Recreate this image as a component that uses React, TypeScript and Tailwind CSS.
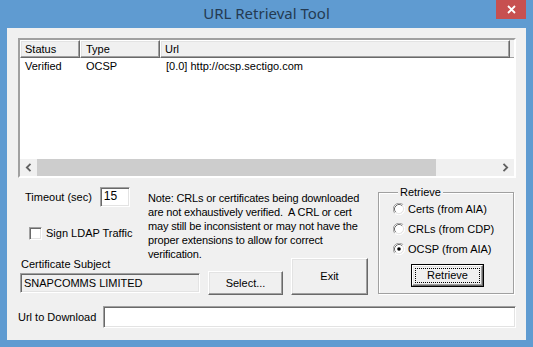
import React from "react"

const raised =
  "bg-[#f0f0f0] border border-t-white border-l-white border-r-[#696969] border-b-[#696969] shadow-[inset_-1px_-1px_0_#a0a0a0,inset_1px_1px_0_#e3e3e3]"
const sunken =
  "border border-t-[#a0a0a0] border-l-[#a0a0a0] border-r-white border-b-white shadow-[inset_1px_1px_0_#696969,inset_-1px_-1px_0_#e3e3e3]"

const rows = [{ status: "Verified", type: "OCSP", url: "[0.0] http://ocsp.sectigo.com" }]

const radios = [
  { label: "Certs (from AIA)", checked: false },
  { label: "CRLs (from CDP)", checked: false },
  { label: "OCSP (from AIA)", checked: true },
]

function Radio({ checked }: { checked: boolean }) {
  return (
    <svg width="12" height="12" viewBox="0 0 12 12">
      <circle cx="6" cy="6" r="5" fill="#fff" />
      <path d="M1.76 10.24 A6 6 0 0 1 10.24 1.76" stroke="#a0a0a0" fill="none" />
      <path d="M10.24 1.76 A6 6 0 0 1 1.76 10.24" stroke="#fff" fill="none" />
      <path d="M2.82 9.18 A4.5 4.5 0 0 1 9.18 2.82" stroke="#696969" fill="none" />
      <path d="M9.18 2.82 A4.5 4.5 0 0 1 2.82 9.18" stroke="#e3e3e3" fill="none" />
      {checked && <circle cx="6" cy="6" r="1.8" fill="#000" />}
    </svg>
  )
}

function Chevron({ dir }: { dir: "left" | "right" }) {
  return (
    <svg width="7" height="9" viewBox="0 0 7 9">
      <polyline
        points={dir === "left" ? "5.5,0.8 1.8,4.5 5.5,8.2" : "1.5,0.8 5.2,4.5 1.5,8.2"}
        fill="none"
        stroke="#606060"
        strokeWidth="1.8"
      />
    </svg>
  )
}

export default function App() {
  return (
    <div className="w-[533px] h-[347px] bg-[#5f9bd1] flex flex-col overflow-hidden font-['Liberation_Sans',Arial,sans-serif] text-[11px] text-black">
      {/* title bar */}
      <div className="h-[28px] grid grid-cols-[1fr_auto_1fr] items-start">
        <div />
        <div className="pt-[4px] text-[15px] leading-[18px] text-[#243a52] font-['Noto_Sans',sans-serif]">
          URL Retrieval Tool
        </div>
        <div className="flex justify-end pr-[7px]">
          <div className="w-[30px] h-[19px] bg-[#c75050] flex items-center justify-center">
            <svg width="9" height="9" viewBox="0 0 9 9">
              <path d="M1 1 L8 8 M8 1 L1 8" stroke="#fff" strokeWidth="1.8" />
            </svg>
          </div>
        </div>
      </div>

      {/* client area */}
      <div className="mx-[7px] h-[312px] bg-[#f0f0f0] pl-[11px] pr-[10px] pt-[10px] flex flex-col">
        {/* list view */}
        <div className="h-[140px] flex flex-col bg-white border-2 border-t-[#a0a0a0] border-l-[#a0a0a0] border-r-white border-b-white">
          <div className="h-[18px] flex shrink-0 bg-white">
            <div className={`${raised} w-[60px] pl-[4px] leading-[16px]`}>Status</div>
            <div className={`${raised} w-[80px] pl-[5px] leading-[16px]`}>Type</div>
            <div className={`${raised} w-[350px] pl-[4px] leading-[16px]`}>Url</div>
            <div className="flex-1 bg-[#f0f0f0] border-b border-b-[#a0a0a0]" />
          </div>
          <div className="flex-1">
            {rows.map((r, i) => (
              <div key={i} className="h-[17px] flex items-center">
                <div className="w-[60px] pl-[5px]">{r.status}</div>
                <div className="w-[80px] pl-[6px]">{r.type}</div>
                <div className="pl-[6px]">{r.url}</div>
              </div>
            ))}
          </div>
          <div className="h-[17px] flex shrink-0 bg-[#f0f0f0]">
            <div className="w-[17px] flex items-center justify-center">
              <Chevron dir="left" />
            </div>
            <div className="w-[399px] bg-[#cdcdcd]" />
            <div className="flex-1" />
            <div className="w-[17px] flex items-center justify-center">
              <Chevron dir="right" />
            </div>
          </div>
        </div>

        {/* middle controls */}
        <div className="mt-[8px] h-[109px] flex">
          <div className="w-[360px] flex flex-col">
            <div className="h-[71px] flex">
              <div className="w-[125px] flex flex-col">
                <div className="mt-[1px] h-[20px] flex items-center pl-[7px]">
                  <span>Timeout (sec)</span>
                  <div className={`${sunken} bg-white ml-[8px] w-[30px] h-[20px] pl-[3px] pt-[1px] text-[12px] leading-[14px]`}>
                    15
                  </div>
                </div>
                <div className="mt-[20px] h-[13px] flex items-center pl-[11px]">
                  <div className={`${sunken} bg-white w-[13px] h-[13px]`} />
                  <span className="ml-[4px]">Sign LDAP Traffic</span>
                </div>
              </div>
              <div className="ml-[5px] pt-[5px] leading-[14px] tracking-[-0.15px] whitespace-pre">
                {"Note: CRLs or certificates being downloaded\nare not exhaustively verified.  A CRL or cert\nmay still be inconsistent or may not have the\nproper extensions to allow for correct\nverification."}
              </div>
            </div>
            <div className="h-[38px] flex items-end">
              <div className="ml-[2px] w-[180px] flex flex-col">
                <div className="pl-[1px] leading-[14px]">Certificate Subject</div>
                <div className={`${sunken} mt-[2px] mb-[2px] h-[20px] pl-[3px] flex items-center`}>
                  SNAPCOMMS LIMITED
                </div>
              </div>
              <div className={`${raised} ml-[8px] w-[75px] h-[24px] flex items-center justify-center`}>
                Select...
              </div>
              <div className={`${raised} ml-[8px] w-[77px] h-[37px] flex items-center justify-center`}>
                Exit
              </div>
            </div>
          </div>

          <fieldset className="w-[136px] h-[108px] border border-[#a0a0a0] shadow-[inset_1px_1px_0_#fff,1px_1px_0_#fff] pl-[14px]">
            <legend className="ml-[5px] px-[2px] leading-[13px] bg-[#f0f0f0]">Retrieve</legend>
            {radios.map((r) => (
              <div key={r.label} className="h-[20px] flex items-center">
                <Radio checked={r.checked} />
                <span className="ml-[3px]">{r.label}</span>
              </div>
            ))}
            <div className="mt-[5px] ml-[18px] w-[73px] h-[23px] border border-black">
              <div className={`${raised} w-full h-full p-[2px]`}>
                <div className="w-full h-full border border-dotted border-black flex items-center justify-center">
                  Retrieve
                </div>
              </div>
            </div>
          </fieldset>
        </div>

        {/* url row */}
        <div className="mt-[11px] h-[22px] flex items-center">
          <div className="w-[85px]">Url to Download</div>
          <div className={`${sunken} bg-white flex-1 h-[22px]`} />
        </div>
      </div>
    </div>
  )
}
